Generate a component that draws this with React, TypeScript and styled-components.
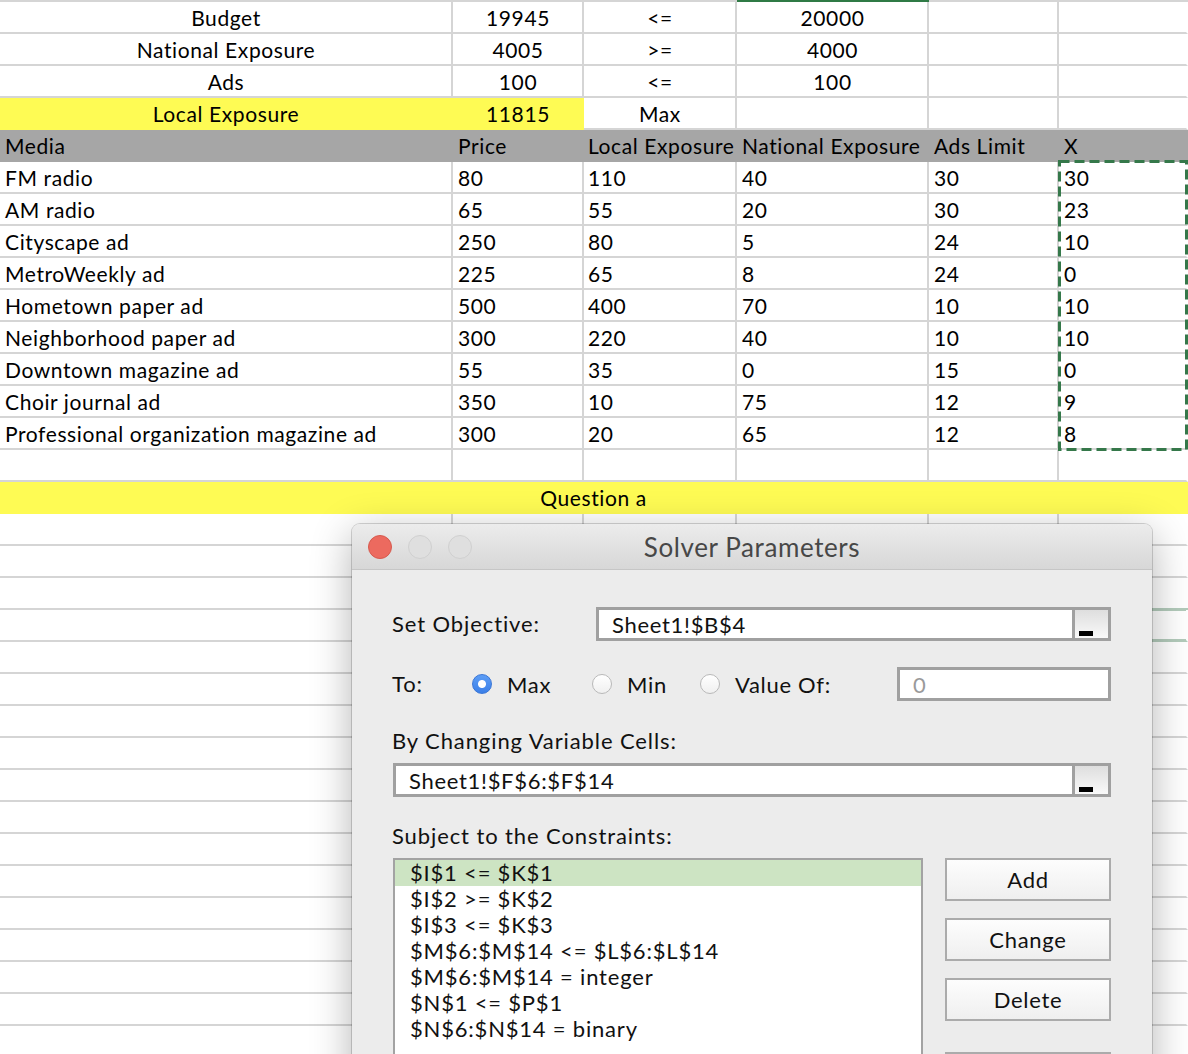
import React from 'react';
import styled, { createGlobalStyle, css } from 'styled-components';

const GlobalStyle = createGlobalStyle`
  html, body { margin: 0; padding: 0; background: #fff; }
  body { overflow: hidden; }
`;

const CELL_FONT = `Lato, "Open Sans", "Liberation Sans", sans-serif`;
const UI_FONT = `Lato, "Open Sans", "Liberation Sans", sans-serif`;

const Page = styled.div`
  position: relative;
  width: 1188px;
  height: 1054px;
  overflow: hidden;
  background: #fff;
  font-family: ${CELL_FONT};
`;

const Sheet = styled.div`
  display: grid;
  grid-template-columns: 453px 131px 153px 192px 130px 129px;
  grid-auto-rows: 32px;
  border-top: 2px solid #d5d5d5;
`;

type CellProps = {
  $center?: boolean;
  $bg?: string;
  $span?: number;
  $merge?: boolean;
  $last?: boolean;
  $accentTop?: boolean;
  $selected?: boolean;
};

const Cell = styled.div<CellProps>`
  box-sizing: border-box;
  grid-column: span ${(p) => p.$span ?? 1};
  display: flex;
  align-items: center;
  justify-content: ${(p) => (p.$center ? 'center' : 'flex-start')};
  padding: 0 4px 0 5px;
  background: ${(p) => p.$bg ?? '#fff'};
  border-right: 2px solid ${(p) => (p.$merge || p.$last ? p.$bg ?? '#fff' : '#d5d5d5')};
  border-bottom: 2px solid ${(p) => (p.$bg ? p.$bg : '#d5d5d5')};
  font-size: 21px;
  letter-spacing: 0.6px;
  line-height: 1;
  color: #000;
  white-space: nowrap;
  overflow: visible;
  ${(p) =>
    p.$accentTop &&
    css`
      box-shadow: 0 -2px 0 #2f7a45;
    `}
  ${(p) =>
    p.$selected &&
    css`
      box-shadow: inset 0 1px 0 #b3cbbb, 0 -2px 0 #b3cbbb, inset 0 -1px 0 #b3cbbb;
      border-bottom-color: #b3cbbb;
    `}
`;

const HeaderCell = styled(Cell)`
  background: #a6a6a6;
  border-right-color: #a6a6a6;
  border-bottom-color: #a6a6a6;
`;

const MarchingAnts = styled.svg`
  position: absolute;
  left: 1058px;
  top: 160px;
  width: 130px;
  height: 292px;
  pointer-events: none;
`;

/* ---------- Dialog ---------- */

const Dialog = styled.div`
  position: absolute;
  left: 352px;
  top: 524px;
  width: 800px;
  height: 600px;
  background: #ececec;
  border-radius: 8px 8px 0 0;
  box-shadow: 0 0 0 1px rgba(0, 0, 0, 0.16), 0 10px 40px rgba(0, 0, 0, 0.3);
  font-family: ${UI_FONT};
  color: #111;
  display: flex;
  flex-direction: column;
`;

const TitleBar = styled.div`
  height: 45px;
  border-bottom: 1px solid #c6c6c6;
  border-radius: 8px 8px 0 0;
  background: linear-gradient(#ececec, #d7d7d7);
  display: grid;
  grid-template-columns: 1fr auto 1fr;
  align-items: center;
`;

const Lights = styled.div`
  display: flex;
  gap: 16px;
  padding-left: 16px;
`;

const Light = styled.span<{ $red?: boolean }>`
  width: 24px;
  height: 24px;
  border-radius: 50%;
  box-sizing: border-box;
  ${(p) =>
    p.$red
      ? css`
          background: #ec6a5f;
          border: 1px solid #d65a4e;
        `
      : css`
          background: #dfdfdf;
          border: 1px solid #d0d0d0;
        `}
`;

const Title = styled.div`
  font-size: 26px;
  color: #474747;
  letter-spacing: 0.6px;
`;

const Body = styled.div`
  padding: 37px 41px 0 40px;
  display: flex;
  flex-direction: column;
`;

const FieldRow = styled.div<{ $mt?: number }>`
  display: flex;
  align-items: center;
  height: 34px;
  margin-top: ${(p) => p.$mt ?? 0}px;
`;

const Label = styled.div<{ $w?: number; $mt?: number }>`
  font-size: 22px;
  letter-spacing: 0.9px;
  line-height: 24px;
  white-space: nowrap;
  ${(p) => (p.$w ? `width: ${p.$w}px; flex: none;` : '')}
  margin-top: ${(p) => p.$mt ?? 0}px;
`;

const Input = styled.div<{ $w?: number; $grow?: boolean }>`
  box-sizing: border-box;
  height: 34px;
  ${(p) => (p.$grow ? 'flex: 1;' : `width: ${p.$w}px; flex: none;`)}
  border: 3px solid #a0a0a0;
  background: #fff;
  display: flex;
  align-items: center;
`;

const InputText = styled.span<{ $muted?: boolean }>`
  flex: 1;
  padding-left: 13px;
  font-size: 22px;
  letter-spacing: 0.7px;
  color: ${(p) => (p.$muted ? '#9a9a9a' : '#111')};
  white-space: nowrap;
`;

const Picker = styled.span`
  align-self: stretch;
  width: 29px;
  border-left: 3px solid #a0a0a0;
  background: linear-gradient(#dedede, #f9f9f9);
  display: flex;
  align-items: flex-end;
  padding: 0 0 2px 4px;
`;

const PickerBar = styled.span`
  width: 14px;
  height: 5px;
  background: #000;
`;

const RadioOption = styled.label<{ $w?: number }>`
  display: flex;
  align-items: center;
  gap: 15px;
  font-size: 22px;
  letter-spacing: 0.7px;
  white-space: nowrap;
  ${(p) => (p.$w ? `width: ${p.$w}px;` : '')}
  flex: none;
`;

const Radio = styled.span<{ $on?: boolean }>`
  width: 20px;
  height: 20px;
  border-radius: 50%;
  box-sizing: border-box;
  flex: none;
  ${(p) =>
    p.$on
      ? css`
          background: radial-gradient(circle, #fff 0 3.5px, transparent 4.5px),
            linear-gradient(#5d9ef6, #3b7fe8);
          border: 1px solid #3a76d6;
        `
      : css`
          background: linear-gradient(#ffffff, #f0f0f0);
          border: 1px solid #b9b9b9;
        `}
`;

const Spacer = styled.div`
  flex: 1;
`;

const ConstraintArea = styled.div`
  display: flex;
  gap: 22px;
  margin-top: 10px;
`;

const ListBox = styled.div`
  box-sizing: border-box;
  width: 530px;
  height: 260px;
  margin-left: 1px;
  border: 2px solid #a3a3a3;
  background: #fff;
  display: flex;
  flex-direction: column;
`;

const ListItem = styled.div<{ $sel?: boolean }>`
  height: 26px;
  line-height: 26px;
  padding-left: 15px;
  font-size: 22px;
  letter-spacing: 0.8px;
  white-space: nowrap;
  background: ${(p) => (p.$sel ? '#cde4c3' : 'transparent')};
`;

const ButtonCol = styled.div`
  display: flex;
  flex-direction: column;
  gap: 17px;
`;

const Button = styled.div<{ $mt?: number }>`
  box-sizing: border-box;
  width: 166px;
  height: 43px;
  border: 2px solid #ababab;
  background: linear-gradient(#fdfdfd, #efefef);
  display: flex;
  align-items: center;
  justify-content: center;
  font-size: 22px;
  letter-spacing: 0.7px;
  margin-top: ${(p) => p.$mt ?? 0}px;
`;

/* ---------- Data ---------- */

const topRows: [string, string, string, string][] = [
  ['Budget', '19945', '<=', '20000'],
  ['National Exposure', '4005', '>=', '4000'],
  ['Ads', '100', '<=', '100'],
];

const media: (string | number)[][] = [
  ['FM radio', 80, 110, 40, 30, 30],
  ['AM radio', 65, 55, 20, 30, 23],
  ['Cityscape ad', 250, 80, 5, 24, 10],
  ['MetroWeekly ad', 225, 65, 8, 24, 0],
  ['Hometown paper ad', 500, 400, 70, 10, 10],
  ['Neighborhood paper ad', 300, 220, 40, 10, 10],
  ['Downtown magazine ad', 55, 35, 0, 15, 0],
  ['Choir journal ad', 350, 10, 75, 12, 9],
  ['Professional organization magazine ad', 300, 20, 65, 12, 8],
];

const headers = ['Media', 'Price', 'Local Exposure', 'National Exposure', 'Ads Limit', 'X'];

const constraints = [
  '$I$1 <= $K$1',
  '$I$2 >= $K$2',
  '$I$3 <= $K$3',
  '$M$6:$M$14 <= $L$6:$L$14',
  '$M$6:$M$14 = integer',
  '$N$1 <= $P$1',
  '$N$6:$N$14 = binary',
];

const YELLOW = '#fefb54';

function EmptyRow({ selectedLast }: { selectedLast?: boolean }) {
  return (
    <>
      {[0, 1, 2, 3, 4, 5].map((i) => (
        <Cell key={i} $last={i === 5} $selected={selectedLast && i === 5} />
      ))}
    </>
  );
}

export default function App() {
  const emptyBelow = Array.from({ length: 17 }, (_, i) => i);
  return (
    <Page>
      <GlobalStyle />
      <Sheet>
        {topRows.map((r, i) => (
          <React.Fragment key={r[0]}>
            <Cell $center>{r[0]}</Cell>
            <Cell $center>{r[1]}</Cell>
            <Cell $center>{r[2]}</Cell>
            <Cell $center $accentTop={i === 0}>
              {r[3]}
            </Cell>
            <Cell />
            <Cell $last />
          </React.Fragment>
        ))}
        <Cell $center $bg={YELLOW} $merge>
          Local Exposure
        </Cell>
        <Cell $center $bg={YELLOW} $merge>
          11815
        </Cell>
        <Cell $center>Max</Cell>
        <Cell />
        <Cell />
        <Cell $last />

        {headers.map((h, i) => (
          <HeaderCell key={h} style={i === 2 ? { paddingLeft: 4 } : undefined}>
            {h}
          </HeaderCell>
        ))}

        {media.map((row) => (
          <React.Fragment key={String(row[0])}>
            {row.map((v, i) => (
              <Cell key={i} $last={i === 5} style={i === 2 ? { paddingLeft: 4 } : undefined}>
                {v}
              </Cell>
            ))}
          </React.Fragment>
        ))}

        <EmptyRow />
        <Cell $span={6} $center $bg={YELLOW} $last>
          Question a
        </Cell>
        {emptyBelow.map((i) => (
          <EmptyRow key={i} selectedLast={i === 3} />
        ))}
      </Sheet>

      <MarchingAnts viewBox="0 0 130 292">
        <rect
          x="1.5"
          y="1.5"
          width="127"
          height="288"
          fill="none"
          stroke="#35784a"
          strokeWidth="3"
          strokeDasharray="10 5"
        />
      </MarchingAnts>

      <Dialog>
        <TitleBar>
          <Lights>
            <Light $red />
            <Light />
            <Light />
          </Lights>
          <Title>Solver Parameters</Title>
          <div />
        </TitleBar>
        <Body>
          <FieldRow>
            <Label $w={204}>Set Objective:</Label>
            <Input $grow>
              <InputText>Sheet1!$B$4</InputText>
              <Picker>
                <PickerBar />
              </Picker>
            </Input>
          </FieldRow>

          <FieldRow $mt={26}>
            <Label $w={80}>To:</Label>
            <RadioOption $w={120}>
              <Radio $on />
              Max
            </RadioOption>
            <RadioOption $w={108}>
              <Radio />
              Min
            </RadioOption>
            <RadioOption>
              <Radio />
              Value Of:
            </RadioOption>
            <Spacer />
            <Input $w={214}>
              <InputText $muted>0</InputText>
            </Input>
          </FieldRow>

          <Label $mt={28}>By Changing Variable Cells:</Label>
          <FieldRow $mt={10}>
            <Input $grow style={{ marginLeft: 1 }}>
              <InputText>Sheet1!$F$6:$F$14</InputText>
              <Picker>
                <PickerBar />
              </Picker>
            </Input>
          </FieldRow>

          <Label $mt={27}>Subject to the Constraints:</Label>
          <ConstraintArea>
            <ListBox>
              {constraints.map((c, i) => (
                <ListItem key={c} $sel={i === 0}>
                  {c}
                </ListItem>
              ))}
            </ListBox>
            <ButtonCol>
              <Button>Add</Button>
              <Button>Change</Button>
              <Button>Delete</Button>
              <Button $mt={14} aria-label="Reset All" />
            </ButtonCol>
          </ConstraintArea>
        </Body>
      </Dialog>
    </Page>
  );
}
